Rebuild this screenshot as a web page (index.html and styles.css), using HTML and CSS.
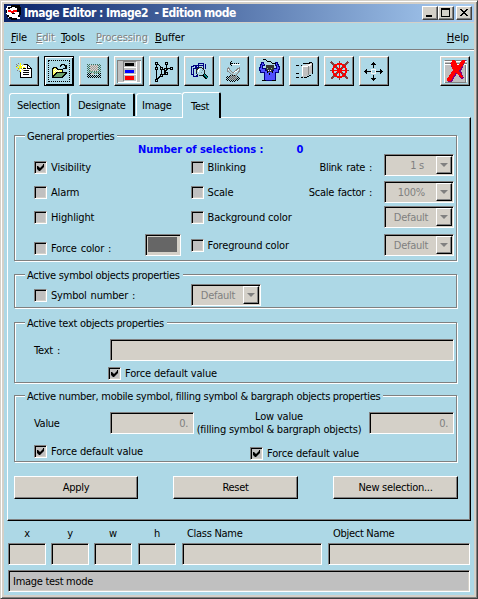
FILE: index.html
```html
<!DOCTYPE html>
<html lang="en">
<head>
<meta charset="utf-8">
<title>Image Editor</title>
<link rel="stylesheet" href="styles.css">
</head>
<body>
<div class="window">
  <header class="titlebar">
    <svg class="logo" width="16" height="16" viewBox="0 0 16 16" shape-rendering="crispEdges">
      <path fill="#fff" d="M1 1h13l1 6-1 7H3l-2-3-1-5z"/>
      <path fill="#000" d="M5 0h9v2h1v8h-1v2h-2v-2h1V7h-3V5h1V3H9V2H6v1H4v1H2V2h3zM0 5h1v3H0zM1 10h2v2h3v1h5v2H5v-1H3v-2H1zM6 8h3v1H6z"/>
      <path fill="red" d="M2 5h3v1h2V5h4v2H8v1H5V7H2z"/>
    </svg>
    <h1>Image Editor : Image2&nbsp; - Edition mode</h1>
    <div class="winbuttons">
      <span><svg viewBox="0 0 12 10"><path fill="#000" d="M2 7h6v2H2z"/></svg></span><span><svg viewBox="0 0 12 10"><path fill="#000" fill-rule="evenodd" d="M1 0h9v9H1zM2 2v6h7V2z"/></svg></span><span class="close"><svg viewBox="0 0 12 10"><path fill="#000" d="M2 1h2v1h1v1h2V2h1V1h2v1H9v1H8v1H7v1h1v1h1v1h1v1H8V7H7V6H5v1H4v1H2V7h1V6h1V5h1V4H4V3H3V2H2z"/></svg></span>
    </div>
  </header>
  <nav class="menu">
    <span class="m-file"><u>F</u>ile</span><span class="m-edit off"><u>E</u>dit</span><span class="m-tools"><u>T</u>ools</span><span class="m-proc off"><u>P</u>rocessing</span><span class="m-buffer"><u>B</u>uffer</span><span class="m-help"><u>H</u>elp</span>
  </nav>
  <div class="toolbar">
    <button class="tool"><svg viewBox="2 2 26 26">
      <path fill="#fff" d="M11 9h8l3 3v10H11z"/>
      <path fill="#000" d="M14 8h5v1h1v1h1v1h1v1h1v10H11V14h1v7h10v-8h-4V9h-4zM19 10v2h2v-1h-1v-1zM14 12h3v1h-3zM14 14h6v1h-6zM14 16h6v1h-6zM14 18h6v1h-6z"/>
      <path fill="#ff0" d="M11 7h1v3h-1zM9 9h1v1H9zM13 9h1v1h-1zM10 10h3v3h-3zM7 11h2v1H7zM14 11h2v1h-2zM9 13h1v1H9zM13 13h1v1h-1zM11 14h1v2h-1z"/>
      <path fill="#808080" d="M7 8h1v1H7zM8 9h1v1H8zM9 7h1v1H9zM14 8h1v1h-1zM9 12h1v1H9zM8 14h1v1H8zM7 10h1v1H7zM12 12h1v1h-1zM14 14h1v1h-1zM10 15h1v1h-1z"/>
    </svg></button>
    <button class="tool focus"><svg viewBox="2 2 26 26">
      <path fill="#ff6" d="M9 12h4l1 2h5v3h-6l-4 4z"/><path fill="#6aa06a" d="M13 17h10l-4 5H9z"/>
      <path fill="none" stroke="#000" d="M8.5 21.500v-9h1v-1h3v1h1v1h5v3M8.500 21.500h10v-1h1v-1h1v-1h1v-1h1v-1H12.500v1h-1v1h-1v1h-1v1h-1M16.500 10.500v-1h1v-1h3v1h1v2M22.500 9v3H19"/>
      <path fill="#fff" d="M10 13h1v1h-1zM12 13h1v1h-1zM11 14h1v1h-1zM13 14h1v1h-1zM15 14h1v1h-1zM10 15h1v1h-1zM12 15h1v1h-1zM14 15h1v1h-1z"/>
    </svg></button>
    <button class="tool"><svg viewBox="2 2 26 26">
      <defs><pattern id="dots" width="2" height="2" patternUnits="userSpaceOnUse"><path fill="#a09c98" d="M0 0h2v2H0z"/><path fill="#d8d4d0" d="M0 0h1v1H0zM1 1h1v1H1z"/></pattern>
      <pattern id="green" width="2" height="2" patternUnits="userSpaceOnUse"><path fill="#3f6f58" d="M0 0h1v1H0zM1 1h1v1H1z"/></pattern>
      <pattern id="black" width="2" height="2" patternUnits="userSpaceOnUse"><path fill="#000" d="M0 0h1v1H0zM1 1h1v1H1z"/></pattern></defs>
      <path fill="url(#green)" d="M8 8h14v10H8z"/><path fill="url(#dots)" d="M11 9h8v6h-8z"/><path fill="#77a58b" d="M9 15h5v1H9zM14 16h7v1h-7z"/><path fill="url(#black)" d="M8 17h4v5H8zM12 19h7v3h-7zM19 17h3v5h-3z"/><path fill="#c8c8c8" d="M12 17h3v2h-3z"/>
    </svg></button>
    <button class="tool"><svg viewBox="2 2 26 26">
      <path fill="#c0c0c0" d="M3 4h24v23H3z"/><path fill="none" stroke="#808080" d="M3.500 27V4.500H27M9.500 25V5.500H22"/><path fill="none" stroke="#fff" d="M10 11.500h12.500V6M10 18.500h12.500V12M10 25.500h12.500V19M26.500 5v21.500H4"/>
      <path fill="#000" d="M11 7h9v3h-9z"/><path fill="#00f" d="M11 14h9v3h-9z"/><path fill="red" d="M11 20h9v4h-9z"/>
    </svg></button>
    <button class="tool"><svg viewBox="2 2 26 26">
      <path fill="none" stroke="#000" d="M7.500 7v17M8.500 7.500l2 2 2 3v7M17.500 7v5l-2 3v3h-2l-6 6M14 13.500h4l-2 3M17.500 12.500h5M8.500 22.500l4-3"/>
      <path fill="#add8e6" stroke="#000" d="M6.500 6.500h2v2h-2zM6.500 11.500h2v2h-2zM6.500 23.500h2v2h-2zM11.500 11.500h2v2h-2zM11.500 18.500h2v2h-2zM16.500 6.500h2v2h-2zM15.500 12.500h2v2h-2zM21.500 11.500h2v2h-2zM16.500 16.500h2v2h-2z"/>
    </svg></button>
    <button class="tool"><svg viewBox="2 2 26 26">
      <path fill="none" stroke="#000080" d="M14 20.500h-1v-1h-1v1H9.500v-2H7.500V10.500h2V9.500h3v2M9.500 18V12.500h2v-3h3v-2h5v2M12.500 18V11.500h2V9.500h5v2M21.500 8v5"/>
      <circle cx="16.500" cy="15.500" r="4" fill="#add8e6" stroke="#222"/><path fill="#fff" d="M14 13h2v1h-1v2h-1z"/><path fill="#79a" d="M18 14h1v1h-1zM17 16h1v1h-1z"/>
      <path fill="none" stroke="#000" stroke-width="3" d="M19.500 18.500l4 4"/><path fill="none" stroke="#008c8c" d="M20 18.500l3.500 3.500"/>
    </svg></button>
    <button class="tool"><svg viewBox="2 2 26 26">
      <path fill="none" stroke="#000" stroke-dasharray="1 1" d="M11 7.500h10M11.500 6v3M12.500 5v5"/>
      <path fill="none" stroke="#fff" d="M13 8.500h8M8.500 12l4 4.500h3l5-4"/><path fill="none" stroke="#888" d="M9 11.500l4 4.500h2l6-5M8.500 12v3l5 4h4l3-4v-4"/><path fill="#b5c9ce" d="M10 14l3 3h4l3-3-2 4h-5z"/>
      <ellipse cx="14" cy="22.500" rx="7" ry="3.500" fill="url(#black)"/><ellipse cx="14" cy="22" rx="4" ry="2" fill="#999" opacity=".7"/>
    </svg></button>
    <button class="tool"><svg viewBox="2 2 26 26">
      <path fill="#5050ff" stroke="#000080" d="M9.500 6.500h-2v2h-1v3h-1v3h1v2h4v8h11v-8h3v-3h1v-3h-1v-2h-1v-2h-2v3h1v3h-3v2h-8v-2h-3v-3h2z"/>
      <path fill="#333" d="M12 9h8v5h-2v2h-5v-2h-1z"/><path fill="none" stroke="#000" d="M9 3.500h2l3 2h2l3 2h3M8 24.500h4M18 24.500h4M15.500 17v2M13.500 15v2M18.500 15v2"/><path fill="#8c8" d="M13 12h1v1h-1zM17 12h1v1h-1z"/><path fill="#fff" d="M14 14h1v1h-1zM16 14h1v1h-1z"/>
    </svg></button>
    <button class="tool"><svg viewBox="2 2 26 26">
      <path fill="#c0c0c0" d="M13 11h6V8l4-1v10l-7 4h-3z"/><path fill="#ddd" d="M14 9l5-1h4l-3 3h-7z"/><path fill="none" stroke="#000" d="M14 7.500h4l5-1M23.500 7v11M22 19.500h-2M20 20.500h-2M18 21.500h-3"/><path fill="none" stroke="#888" d="M19.500 10v9"/><path fill="none" stroke="#fff" d="M13.500 20v-9.500h5l4-3"/>
      <path fill="none" stroke="#000" stroke-dasharray="3 2" d="M7 9.500h6M7 17.500h5M7 21.500h7"/>
    </svg></button>
    <button class="tool"><svg viewBox="2 2 26 26">
      <path fill="none" stroke="#804040" d="M6 14.500h19M15.500 5v19M7 6l17 17M24 6L7 23" stroke-width="1.500"/>
      <circle cx="15.500" cy="14.500" r="6.500" fill="none" stroke="red" stroke-width="2"/><path fill="none" stroke="red" d="M9 14.500h13M15.500 8v13M11 10l9 9M20 10l-9 9"/><circle cx="15.500" cy="14.500" r="2" fill="none" stroke="red"/>
    </svg></button>
    <button class="tool"><svg viewBox="2 2 26 26">
      <path fill="#000" d="M14 6h1v1h1v1h1v1h-2v3h-1V9h-2V8h1V7h1zM14 25h1v-1h1v-1h1v-1h-2v-3h-1v3h-2v1h1v1h1zM5 15h1v-1h1v-1h1v2h4v1H8v2H7v-1H6v-1H5zM24 15h-1v-1h-1v-1h-1v2h-4v1h4v2h1v-1h1v-1h1z"/>
      <path fill="#f4f4f4" d="M12 13h5v5h-5z"/><path fill="#add8e6" d="M13 14h3v3h-3z"/>
    </svg></button>
    <button class="tool last"><svg viewBox="2 2 26 26">
      <path fill="#c0c0c0" d="M4 4h23v23H4z"/><path fill="none" stroke="#fff" d="M4.500 27V5.500H27M5 8.500h22M26.500 9v17"/><path fill="none" stroke="#808080" d="M5 4.500h22M5 7.500h22M25.500 9v17.500H5"/>
      <path fill="#800080" d="M13 5l5 7 5-8h3l-5 11 3 7-3 1-4-6-5 9H8l5-12-3-7z"/>
      <path fill="red" d="M12 4h3l3 6 4-6h3v2l-6 9 4 6-2 1-5-6-5 9H7v-2l6-9-2-6z"/>
    </svg></button>
  </div>
  <div class="tabs"><span class="t1">Selection</span><span class="t2">Designate</span><span class="t3">Image</span><span class="t4">Test</span></div>
  <main class="panel">
    <section class="group general">
      <h2>General properties</h2>
      <div class="count"><b>Number of selections :</b><b>0</b></div>
      <div class="columns">
        <div class="col left">
          <label><i class="box on"></i>Visibility</label>
          <label><i class="box"></i>Alarm</label>
          <label><i class="box"></i>Highlight</label>
          <div class="force"><label><i class="box"></i><span class="wide">Force color :</span></label><i class="swatch"></i></div>
        </div>
        <div class="col mid">
          <label><i class="box"></i>Blinking</label>
          <label><i class="box"></i>Scale</label>
          <label><i class="box"></i>Background color</label>
          <label class="fg"><i class="box"></i>Foreground color</label>
        </div>
        <div class="col captions"><span>Blink rate :</span><span>Scale factor :</span></div>
        <div class="col combos">
          <div class="combo c1"><span>1 s</span><i></i></div>
          <div class="combo c2"><span>100%</span><i></i></div>
          <div class="combo c3"><span>Default</span><i></i></div>
          <div class="combo c4"><span>Default</span><i></i></div>
        </div>
      </div>
    </section>
    <section class="group symbol">
      <h2>Active symbol objects properties</h2>
      <div class="line"><label><i class="box"></i><span class="wide">Symbol number :</span></label><div class="combo"><span>Default</span><i></i></div></div>
    </section>
    <section class="group text">
      <h2>Active text objects properties</h2>
      <div class="line"><span class="wide">Text :</span><div class="field"></div></div>
      <label><i class="box on"></i>Force default value</label>
    </section>
    <section class="group number">
      <h2>Active number, mobile symbol, filling symbol &amp; bargraph objects properties</h2>
      <div class="line"><span class="value">Value</span><div class="field">0.</div><div class="low">Low value<br>(filling symbol &amp; bargraph objects)</div><div class="field f2">0.</div></div>
      <div class="checks"><label><i class="box on"></i>Force default value</label><label class="lower"><i class="box on"></i>Force default value</label></div>
    </section>
    <div class="actions"><button>Apply</button><button>Reset</button><button>New selection...</button></div>
  </main>
  <footer>
    <div class="coords">
      <div><span>x</span><i class="field"></i></div><div><span>y</span><i class="field"></i></div><div><span>w</span><i class="field"></i></div><div><span>h</span><i class="field"></i></div><div class="name"><span>Class Name</span><i class="field"></i></div><div class="name last"><span>Object Name</span><i class="field"></i></div>
    </div>
    <div class="status field">Image test mode</div>
  </footer>
</div>
</body>
</html>
```
FILE: styles.css
```css
* { box-sizing: border-box; }
body {
  margin: 0;
  font: 11px/13px "DejaVu Sans Condensed", "DejaVu Sans", sans-serif;
  font-stretch: condensed;
  letter-spacing: -0.29px;
  color: #000;
  white-space: nowrap;
  overflow: hidden;
}
svg { display: block; shape-rendering: crispEdges; }
i { display: block; font-style: normal; flex: none; }
h1, h2 { margin: 0; font: inherit; }
button { font: inherit; letter-spacing: inherit; color: inherit; padding: 0; margin: 0; }

.window {
  width: 478px;
  height: 599px;
  padding: 3px;
  border: 1px solid #404040;
  border-top-color: #d4d0c8;
  border-left-color: #d4d0c8;
  box-shadow: inset 1px 1px #fff, inset -1px -1px #808080, inset 0 0 0 3px #d4d0c8;
  background: #add8e6;
}

.titlebar {
  display: flex;
  align-items: center;
  height: 18px;
  padding-left: 2px;
  background: linear-gradient(90deg, #0a246a, #a6caf0 98%);
  color: #fff;
}
.titlebar h1 { flex: 1; margin-left: 2px; font-weight: bold; font-size: 12px; letter-spacing: -0.52px; }
.winbuttons { display: flex; margin-right: 2px; }
.winbuttons span {
  width: 16px; height: 14px;
  padding: 1px;
  background: #d4d0c8;
  border: 1px solid;
  border-color: #fff #404040 #404040 #fff;
  box-shadow: inset -1px -1px #808080;
}
.winbuttons svg { width: 12px; height: 10px; }
.winbuttons .close { margin-left: 2px; }

.menu {
  display: flex;
  align-items: center;
  height: 29px;
  padding: 1px 5px 0 7px;
  border-top: 1px solid #d4d0c8;
  border-bottom: 1px solid #fff;
  box-shadow: inset 0 -1px #808080;
  letter-spacing: -0.1px;
}
.m-file { width: 25px; }
.m-edit { width: 25px; }
.m-tools { width: 35px; }
.m-proc { width: 59px; }
.m-help { margin-left: auto; }
.off { color: #808080; text-shadow: 1px 1px #fff; }

.toolbar { display: flex; gap: 5px; height: 30px; margin: 5px 4px 0 5px; }
.tool {
  width: 30px; height: 30px;
  flex: none;
  padding: 1px;
  background: #add8e6;
  border: 1px solid;
  border-color: #fff #000 #000 #fff;
  box-shadow: inset -1px -1px #808080, inset 1px 1px #d4d0c8;
}
.tool svg { width: 26px; height: 26px; }
.tool.focus { border-color: #000; box-shadow: inset 1px 1px #fff, inset -1px -1px #000; }
.tool.focus svg { outline: 1px dotted #000; outline-offset: -3px; }
.tool.last { margin-left: auto; }

.tabs { display: flex; align-items: flex-end; height: 31px; padding-left: 5px; position: relative; }
.tabs span {
  height: 23px;
  padding: 5px 0 0 7px;
  margin-bottom: 1px;
  border: 1px solid #fff;
  border-right: 2px solid #000;
  border-bottom: 0;
  border-radius: 3px 2px 0 0;
}
.tabs .t1 { width: 60px; }
.tabs .t2 { width: 65px; margin-left: 1px; }
.tabs .t3 { width: 46px; margin-left: 1px; padding-left: 5px; border-right: 0; }
.tabs .t4 { width: 39px; height: 26px; padding: 7px 0 0 8px; margin-bottom: -1px; background: #add8e6; }

.panel {
  height: 404px;
  margin: 0 3px;
  border: 1px solid;
  border-color: #fff #000 #000 #fff;
  box-shadow: inset -1px -1px #808080;
  padding: 17px 11px 0 6px;
}
.group {
  display: flex;
  flex-direction: column;
  border: 1px solid #808080;
  box-shadow: inset 1px 1px #fff, 1px 1px #fff;
  width: 443px;
  margin-right: 1px;
  padding: 0 2px 0 19px;
}
.group h2 {
  align-self: flex-start;
  height: 13px;
  margin: -6px 0 0 -9px;
  padding: 0 3px 0 2px;
  background: #add8e6;
}
.general { height: 126px; }
.symbol { height: 34px; margin-top: 13px; }
.text { height: 61px; margin-top: 14px; }
.number { height: 67px; margin-top: 12px; }

label { display: flex; align-items: center; height: 13px; gap: 4px; letter-spacing: -0.15px; }
.wide { word-spacing: 1px; letter-spacing: -0.2px; }
.box {
  width: 13px; height: 13px;
  background: #c0c0c0;
  border: 1px solid;
  border-color: #808080 #fff #fff #808080;
  box-shadow: inset 1px 1px #000, inset -1px -1px #d4d0c8;
}
.box.on::after {
  content: "";
  display: block;
  width: 7px; height: 7px;
  margin: 2px;
  background: #000;
  clip-path: polygon(0 2px, 1px 2px, 3px 4px, 6px 1px, 6px 0, 7px 0, 7px 3px, 3px 7px, 2px 7px, 0 5px);
}
.count { display: flex; height: 13px; margin: 0 0 0 104px; gap: 33px; color: #00f; letter-spacing: -0.03px; }
.columns { display: flex; margin-top: -2px; }
.col { display: flex; flex-direction: column; }
.left { width: 157px; padding-top: 7px; gap: 12px; }
.force { display: flex; align-items: center; margin-top: -2px; height: 22px; width: 147px; justify-content: space-between; }
.force label { margin-top: 7px; }
.swatch {
  width: 36px; height: 22px;
  background: #666;
  border: 1px solid;
  border-color: #808080 #fff #fff #808080;
  box-shadow: inset 1px 1px #000, inset 2px 2px #d4d0c8, inset -3px -3px #d4d0c8;
}
.mid { width: 118px; padding-top: 7px; gap: 12px; }
.mid .fg { margin-top: 3px; }
.captions { width: 64px; padding-top: 7px; gap: 12px; align-items: flex-end; word-spacing: 1px; }
.combos { margin-left: 12px; }
.c2 { margin-top: 5px; }
.c3 { margin-top: 3px; }
.c4 { margin-top: 6px; }
.combo {
  display: flex;
  width: 70px; height: 22px;
  padding: 1px;
  background: #d4d0c8;
  color: #808080;
  border: 1px solid;
  border-color: #808080 #fff #fff #808080;
  box-shadow: inset 1px 1px #000, inset -1px -1px #d4d0c8;
}
.combo span { flex: 1; padding: 3px 8px 0 0; text-align: right; }
.c1 span { padding-right: 12px; }
.c2 span { padding-right: 11px; }
.combo i {
  width: 16px; height: 18px;
  border: 1px solid;
  border-color: #fff #000 #000 #fff;
  box-shadow: inset -1px -1px #808080;
}
.combo i::after {
  content: "";
  display: block;
  width: 8px; height: 4px;
  margin: 6px 0 0 3px;
  background: #808080;
  clip-path: polygon(0 0, 100% 0, 50% 100%);
}
.symbol .line { display: flex; align-items: center; margin-top: 2px; }
.symbol .combo { margin-left: auto; margin-right: 193px; }
.field {
  height: 22px;
  background: #d4d0c8;
  border: 1px solid;
  border-color: #808080 #fff #fff #808080;
  box-shadow: inset 1px 1px #000, inset -1px -1px #d4d0c8;
}
.text .line { display: flex; align-items: center; margin-top: 9px; }
.text .line span { width: 76px; }
.text .field { width: 344px; }
.text > label { margin: 6px 0 0 74px; }
.number .line { display: flex; align-items: center; height: 22px; margin-top: 9px; }
.value { width: 76px; flex: none; }
.number .field { width: 84px; flex: none; padding: 4px 5px 0 0; text-align: right; color: #808080; }
.low { width: 168px; margin-left: 1px; flex: none; text-align: center; letter-spacing: -0.2px; }
.number .f2 { width: 85px; margin-left: 6px; }
.checks { display: flex; gap: 109px; margin-top: 11px; }
.checks label { width: 107px; }
.checks .lower { margin-top: 2px; }
.actions { display: flex; gap: 35px; width: 444px; margin-top: 14px; }
.actions button {
  width: 125px; height: 23px;
  flex: none;
  background: #d4d0c8;
  border: 1px solid;
  border-color: #fff #000 #000 #fff;
  box-shadow: inset -1px -1px #808080;
}
.actions button:first-child { width: 124px; }
footer { padding: 6px 4px 0; }
.coords { display: grid; grid-template-columns: 43px 43px 44px 44px 146px 142px; }
.coords > div { width: 38px; }
.coords span { display: block; height: 16px; text-align: center; }
.coords .name { width: 140px; }
.coords .last { width: 142px; }
.coords .name span { text-align: left; padding-left: 5px; }
.status { margin-top: 5px; padding: 4px 0 0 4px; background: #c0c0c0; }
```
